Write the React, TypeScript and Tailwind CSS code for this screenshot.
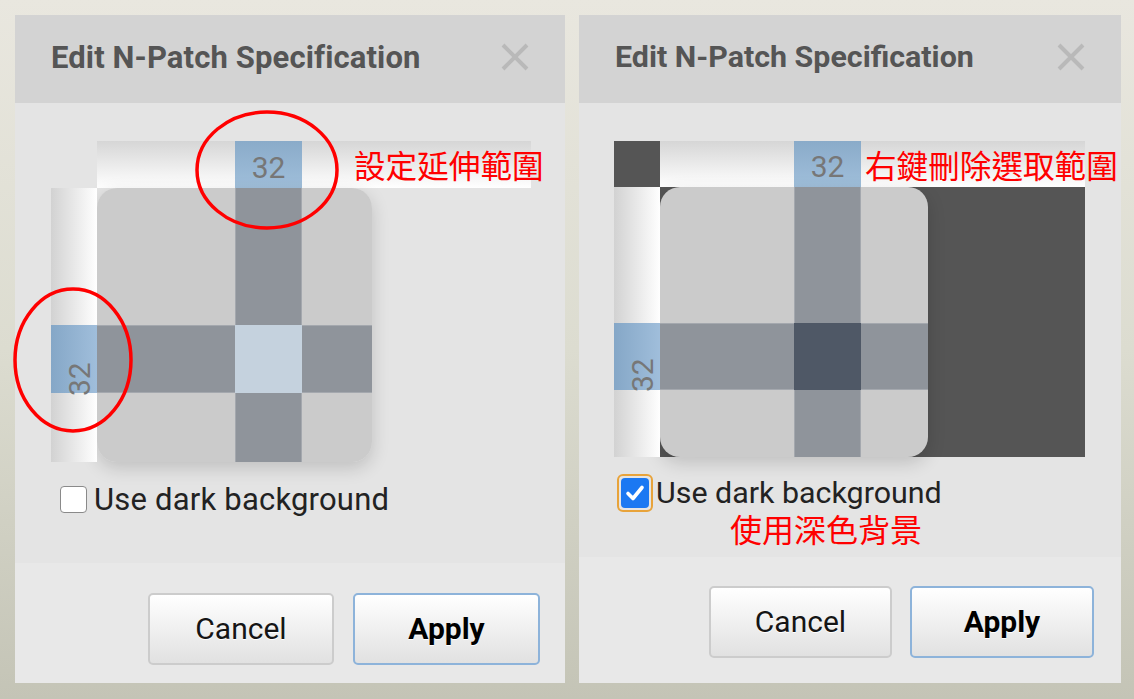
import React from "react";

const FONT = "font-[family-name:Roboto,'Noto_Sans_CJK_TC',sans-serif]";

function CloseX() {
  return (
    <svg width="28" height="28" viewBox="0 0 28 28" className="shrink-0">
      <path d="M2 2 L26 26 M26 2 L2 26" stroke="#b9b9b9" strokeWidth="4" />
    </svg>
  );
}

function Header({ small }: { small?: boolean }) {
  return (
    <div className="h-[88px] shrink-0 bg-[#d3d3d3] flex items-center justify-between pl-[36px] pr-[36px] pb-[4px]">
      <div
        className={
          (small ? "text-[30.4px] " : "text-[31px] tracking-[0.12px] ") +
          "leading-none font-bold text-[#555555]"
        }
      >
        Edit N-Patch Specification
      </div>
      <CloseX />
    </div>
  );
}

function Btn({ label, primary, w }: { label: string; primary?: boolean; w: string }) {
  return (
    <div
      className={
        (primary
          ? "border-[#8db3da] font-bold text-black "
          : "border-[#cccccc] text-[#151515] ") +
        w +
        " h-[72px] border-2 rounded-[5px] bg-gradient-to-b from-white to-[#e1e1e1] flex items-center justify-center text-[30px] leading-none [text-shadow:0_1px_0_#ffffff]"
      }
    >
      {label}
    </div>
  );
}

function LeftPatch() {
  return (
    <div className="w-[480px] h-[321px] flex flex-col">
      <div className="h-[47px] flex">
        <div className="w-[46px] shrink-0" />
        <div className="flex-1 flex bg-gradient-to-b from-[#d6d6d6] to-white">
          <div className="w-[138px] shrink-0" />
          <div className="w-[67px] shrink-0 bg-gradient-to-b from-[#8aabc9] to-[#a0bfdb] flex items-center justify-center pt-[6px] text-[30px] leading-none text-[#777777]">
            32
          </div>
        </div>
      </div>
      <div className="flex-1 flex">
        <div className="relative w-[46px] shrink-0 flex flex-col bg-gradient-to-r from-[#d2d2d2] to-white">
          <div className="h-[137px] shrink-0" />
          <div className="h-[68px] shrink-0 bg-gradient-to-r from-[#85a7c7] to-[#a0bedb]" />
          <span className="absolute left-[14px] top-[208px] origin-top-left -rotate-90 text-[30px] leading-none text-[#777777] whitespace-nowrap">
            32
          </span>
        </div>
        <div className="flex-1">
          <div className="w-[275px] h-[274px] rounded-[20px] overflow-hidden shadow-[0_6px_18px_rgba(0,0,0,0.16)] grid grid-cols-[138px_67px_70px] grid-rows-[137px_68px_69px]">
            <div className="bg-[#cbcbcb]" />
            <div className="bg-[#8f949b] shadow-[inset_1px_0_0_#a4a8ae,inset_-1px_0_0_#a4a8ae]" />
            <div className="bg-[#cbcbcb]" />
            <div className="bg-[#8f949b] shadow-[inset_0_1px_0_#a4a8ae,inset_0_-1px_0_#a4a8ae]" />
            <div className="bg-[#c5d2de]" />
            <div className="bg-[#8f949b] shadow-[inset_0_1px_0_#a4a8ae,inset_0_-1px_0_#a4a8ae]" />
            <div className="bg-[#cbcbcb]" />
            <div className="bg-[#8f949b] shadow-[inset_1px_0_0_#a4a8ae,inset_-1px_0_0_#a4a8ae]" />
            <div className="bg-[#cbcbcb]" />
          </div>
        </div>
      </div>
    </div>
  );
}

function RightPatch() {
  return (
    <div className="w-[471px] h-[316px] flex flex-col bg-[#555555]">
      <div className="h-[46px] flex">
        <div className="w-[46px] shrink-0" />
        <div className="flex-1 flex bg-gradient-to-b from-[#d6d6d6] to-white">
          <div className="w-[134px] shrink-0" />
          <div className="w-[67px] shrink-0 bg-gradient-to-b from-[#8aabc9] to-[#a0bfdb] flex items-center justify-center pt-[6px] text-[30px] leading-none text-[#777777]">
            32
          </div>
        </div>
      </div>
      <div className="flex-1 flex">
        <div className="relative w-[46px] shrink-0 flex flex-col bg-gradient-to-r from-[#d2d2d2] to-white">
          <div className="h-[136px] shrink-0" />
          <div className="h-[67px] shrink-0 bg-gradient-to-r from-[#85a7c7] to-[#a0bedb]" />
          <span className="absolute left-[14px] top-[205px] origin-top-left -rotate-90 text-[30px] leading-none text-[#777777] whitespace-nowrap">
            32
          </span>
        </div>
        <div className="flex-1">
          <div className="w-[268px] h-[270px] rounded-[20px] overflow-hidden shadow-[0_6px_18px_rgba(0,0,0,0.16)] grid grid-cols-[134px_67px_67px] grid-rows-[136px_67px_67px]">
            <div className="bg-[#cbcbcb]" />
            <div className="bg-[#8f949b] shadow-[inset_1px_0_0_#a4a8ae,inset_-1px_0_0_#a4a8ae]" />
            <div className="bg-[#cbcbcb]" />
            <div className="bg-[#8f949b] shadow-[inset_0_1px_0_#a4a8ae,inset_0_-1px_0_#a4a8ae]" />
            <div className="bg-[#4f5866]" />
            <div className="bg-[#8f949b] shadow-[inset_0_1px_0_#a4a8ae,inset_0_-1px_0_#a4a8ae]" />
            <div className="bg-[#cbcbcb]" />
            <div className="bg-[#8f949b] shadow-[inset_1px_0_0_#a4a8ae,inset_-1px_0_0_#a4a8ae]" />
            <div className="bg-[#cbcbcb]" />
          </div>
        </div>
      </div>
    </div>
  );
}

export default function App() {
  return (
    <div
      className={
        FONT +
        " relative w-[1134px] h-[699px] overflow-hidden flex gap-[14px] pt-[15px] pl-[15px] bg-gradient-to-b from-[#e9e7df] via-[#dcdcd0] to-[#c4c4b6]"
      }
    >
      {/* Left dialog */}
      <div className="w-[550px] h-[668px] flex flex-col shrink-0">
        <Header />
        <div className="h-[460px] shrink-0 bg-[#e4e4e4] pt-[38px] pl-[36px]">
          <LeftPatch />
          <div className="mt-[22px] ml-[9px] flex items-center">
            <div className="w-[27px] h-[27px] rounded-[4px] border border-[#8a8a8a] bg-white" />
            <span className="ml-[7px] text-[31px] leading-none tracking-[0.2px] text-[#222222]">Use dark background</span>
          </div>
        </div>
        <div className="flex-1 bg-[#e8e8e8] flex justify-end gap-[19px] pt-[30px] pr-[25px]">
          <Btn label="Cancel" w="w-[186px]" />
          <Btn label="Apply" primary w="w-[187px]" />
        </div>
      </div>

      {/* Right dialog */}
      <div className="w-[542px] h-[668px] flex flex-col shrink-0">
        <Header small />
        <div className="h-[454px] shrink-0 bg-[#e4e4e4] pt-[38px] pl-[35px]">
          <RightPatch />
          <div className="mt-[17px] ml-[3px] flex items-center">
            <div className="border-2 border-[#e8a33a] rounded-[6px] p-[2px]">
              <div className="w-[28px] h-[30px] rounded-[4px] bg-[#1b78f2] flex items-center justify-center">
                <svg width="20" height="18" viewBox="0 0 20 18">
                  <path d="M3 9.5 L8 14.5 L17 3.5" stroke="white" strokeWidth="3.6" fill="none" strokeLinecap="round" strokeLinejoin="round" />
                </svg>
              </div>
            </div>
            <span className="ml-[3px] text-[30.4px] leading-none text-[#222222]">Use dark background</span>
          </div>
          <div className="mt-[3px] ml-[116px] text-[32px] leading-none text-[#ff0000]">使用深色背景</div>
        </div>
        <div className="flex-1 bg-[#e8e8e8] flex justify-end gap-[18px] pt-[29px] pr-[27px]">
          <Btn label="Cancel" w="w-[183px]" />
          <Btn label="Apply" primary w="w-[184px]" />
        </div>
      </div>

      {/* Annotations */}
      <span className="absolute left-[354px] top-[152px] text-[31.6px] leading-none text-[#ff0000] whitespace-nowrap">設定延伸範圍</span>
      <span className="absolute left-[865px] top-[152px] text-[31.6px] leading-none text-[#ff0000] whitespace-nowrap">右鍵刪除選取範圍</span>
      <svg className="absolute left-0 top-0 pointer-events-none" width="1134" height="699" viewBox="0 0 1134 699">
        <ellipse cx="267" cy="170" rx="70" ry="58" fill="none" stroke="#ff0000" strokeWidth="3.5" />
        <ellipse cx="73" cy="360" rx="58" ry="71" fill="none" stroke="#ff0000" strokeWidth="3.5" />
      </svg>
    </div>
  );
}
